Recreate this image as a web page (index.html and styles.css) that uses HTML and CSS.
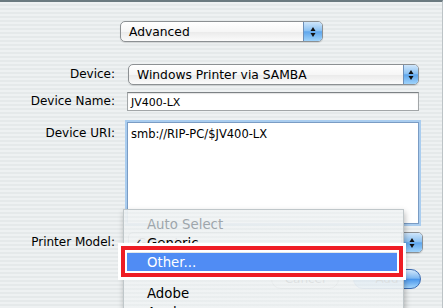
FILE: index.html
```html
<!DOCTYPE html>
<html lang="en">

<head>
  <meta charset="UTF-8">
  <meta name="viewport" content="width=device-width, initial-scale=1.0">
  <title>Add Printer</title>
  <link rel="stylesheet" href="styles.css">
</head>

<body>
  <div class="window">
    <div class="top-row">
      <div class="popup popup-mode">
        <span class="popup-text">Advanced</span>
        <span class="popup-arrows">
          <svg viewBox="0 0 8 14" width="8" height="14"><path d="M4 2L6.5 6H1.5z M4 12L6.5 8H1.5z"/></svg>
        </span>
      </div>
    </div>

    <div class="form">
      <div class="row row-device">
        <span class="label">Device:</span>
        <div class="popup popup-device">
          <span class="popup-text">Windows Printer via SAMBA</span>
          <span class="popup-arrows">
            <svg viewBox="0 0 8 14" width="8" height="14"><path d="M4 2L6.5 6H1.5z M4 12L6.5 8H1.5z"/></svg>
          </span>
        </div>
      </div>

      <div class="row row-name">
        <span class="label">Device Name:</span>
        <div class="field">JV400-LX</div>
      </div>

      <div class="row row-uri">
        <span class="label">Device URI:</span>
        <div class="field field-area">smb://RIP-PC/$JV400-LX</div>
      </div>

      <div class="row row-model">
        <span class="label">Printer Model:</span>
        <div class="popup popup-model">
          <span class="popup-text">Generic</span>
          <span class="popup-arrows">
            <svg viewBox="0 0 8 14" width="8" height="14"><path d="M4 2L6.5 6H1.5z M4 12L6.5 8H1.5z"/></svg>
          </span>
        </div>
      </div>
    </div>

    <div class="buttons">
      <span class="button">Cancel</span>
      <span class="button button-default">Add</span>
    </div>

    <!-- open popup menu for Printer Model -->
    <div class="menu">
      <div class="menu-item disabled"><span class="check"></span>Auto Select</div>
      <div class="menu-item"><span class="check">✓</span>Generic</div>
      <div class="menu-item selected"><span class="check"></span>Other...</div>
      <div class="menu-separator"></div>
      <div class="menu-item"><span class="check"></span>Adobe</div>
      <div class="menu-item"><span class="check"></span>Apple</div>
    </div>

    <div class="callout"><div class="callout-red"><div class="callout-inner"></div></div></div>
  </div>
</body>

</html>
```

FILE: styles.css
```css
* {
  margin: 0;
  padding: 0;
  box-sizing: border-box;
}

body {
  width: 444px;
  height: 308px;
  overflow: hidden;
  font-family: "DejaVu Sans", "Liberation Sans", sans-serif;
  font-size: 12px;
  color: #000;
}

.window {
  position: relative;
  width: 443px;
  height: 308px;
  overflow: hidden;
  border-top: 2px solid #6b7a80;
  border-right: 1px solid #bcc3c6;
  background: repeating-linear-gradient(to bottom, #eef1f2 0, #eef1f2 2px, #e5e9ea 2px, #e5e9ea 4px);
}

.top-row {
  display: flex;
  justify-content: center;
  padding-top: 19px;
  padding-left: 1px;
}

/* aqua popup button */
.popup {
  display: flex;
  align-items: center;
  height: 21px;
  border: 1px solid #8c9093;
  border-radius: 5px;
  background: linear-gradient(to bottom, #ffffff 0%, #f6f6f6 50%, #eaeaea 52%, #fbfbfb 100%);
  box-shadow: 0 1px 1px rgba(0, 0, 0, 0.12);
  overflow: hidden;
}

.popup-text {
  flex: 1;
  padding-left: 8px;
  font-size: 12.3px;
  white-space: nowrap;
}

.popup-arrows {
  display: flex;
  align-items: center;
  justify-content: center;
  width: 19px;
  height: 100%;
  border-left: 1px solid #6d8fb8;
  background: linear-gradient(to bottom, #cfe6fb 0%, #8cc2f3 45%, #5fa6ec 52%, #9fd3fb 100%);
}

.popup-arrows svg {
  fill: #111;
}

.popup-mode {
  width: 203px;
}

.form {
  padding-top: 22px;
}

.row {
  display: flex;
  align-items: center;
  gap: 12px;
}

.label {
  width: 115px;
  text-align: right;
  line-height: 15px;
  white-space: nowrap;
}

.popup-device {
  width: 291px;
  margin-left: 1px;
}

.popup-device .popup-arrows {
  width: 15px;
}

.row-name {
  margin-top: 7px;
}

.field {
  width: 292px;
  height: 19px;
  padding: 2px 3px 0;
  font-size: 11px;
  line-height: 15px;
  background: #fff;
  border: 1px solid #a2a6a8;
  border-top-color: #7d8285;
  box-shadow: inset 0 1px 1px rgba(0, 0, 0, 0.12);
}

.row-uri {
  align-items: flex-start;
  margin-top: 11px;
}

.row-uri .label {
  padding-top: 4px;
}

.field-area {
  width: 292px;
  height: 102px;
  padding: 4px 3px 0;
  font-size: 11.5px;
  border: 1px solid #7a9cc4;
  box-shadow: 0 0 0 2px #aacdef;
}

.row-model {
  margin-top: 8px;
}

.popup-model {
  width: 295px;
  margin-left: 1px;
}

.popup-model .popup-arrows {
  width: 21px;
}

.buttons {
  display: flex;
  justify-content: flex-end;
  gap: 14px;
  padding: 16px 21px 0 0;
}

.button {
  width: 68px;
  height: 20px;
  line-height: 18px;
  text-align: center;
  font-size: 12px;
  border: 1px solid #8e9295;
  border-radius: 10px;
  background: linear-gradient(to bottom, #ffffff 0%, #f4f4f4 50%, #e6e6e6 52%, #fafafa 100%);
}

.button-default {
  border-color: #3d6db3;
  background: linear-gradient(to bottom, #d2e8fc 0%, #7fb8f1 45%, #4b97eb 52%, #a3d6fd 100%);
}

/* popup menu, drawn over the form */
.menu {
  position: absolute;
  left: 123px;
  top: 207px;
  width: 281px;
  height: 130px;
  padding-top: 5px;
  font-size: 13.3px;
  border: 1px solid #c0c7ca;
  background: repeating-linear-gradient(to bottom, rgba(240, 243, 244, 0.93) 0, rgba(240, 243, 244, 0.93) 2px, rgba(234, 238, 239, 0.93) 2px, rgba(234, 238, 239, 0.93) 4px);
  box-shadow: 1px 3px 6px rgba(0, 0, 0, 0.28);
}

.menu-item {
  display: flex;
  align-items: center;
  height: 19px;
  padding-left: 8px;
  white-space: nowrap;
}

.check {
  width: 15px;
  font-size: 13px;
  color: #333;
}

.menu-item.disabled {
  color: #9ea6ab;
}

.menu-item.selected {
  color: #fff;
  background: #508cf4;
}

.menu-separator {
  height: 12px;
}

/* red highlight box around the chosen item */
.callout {
  position: absolute;
  left: 118px;
  top: 241px;
  width: 288px;
  height: 37px;
  border: 3px solid #fff;
}

.callout-red {
  height: 100%;
  border: 4px solid #ee1c24;
}

.callout-inner {
  height: 100%;
  border: 2px solid #fff;
}
```
